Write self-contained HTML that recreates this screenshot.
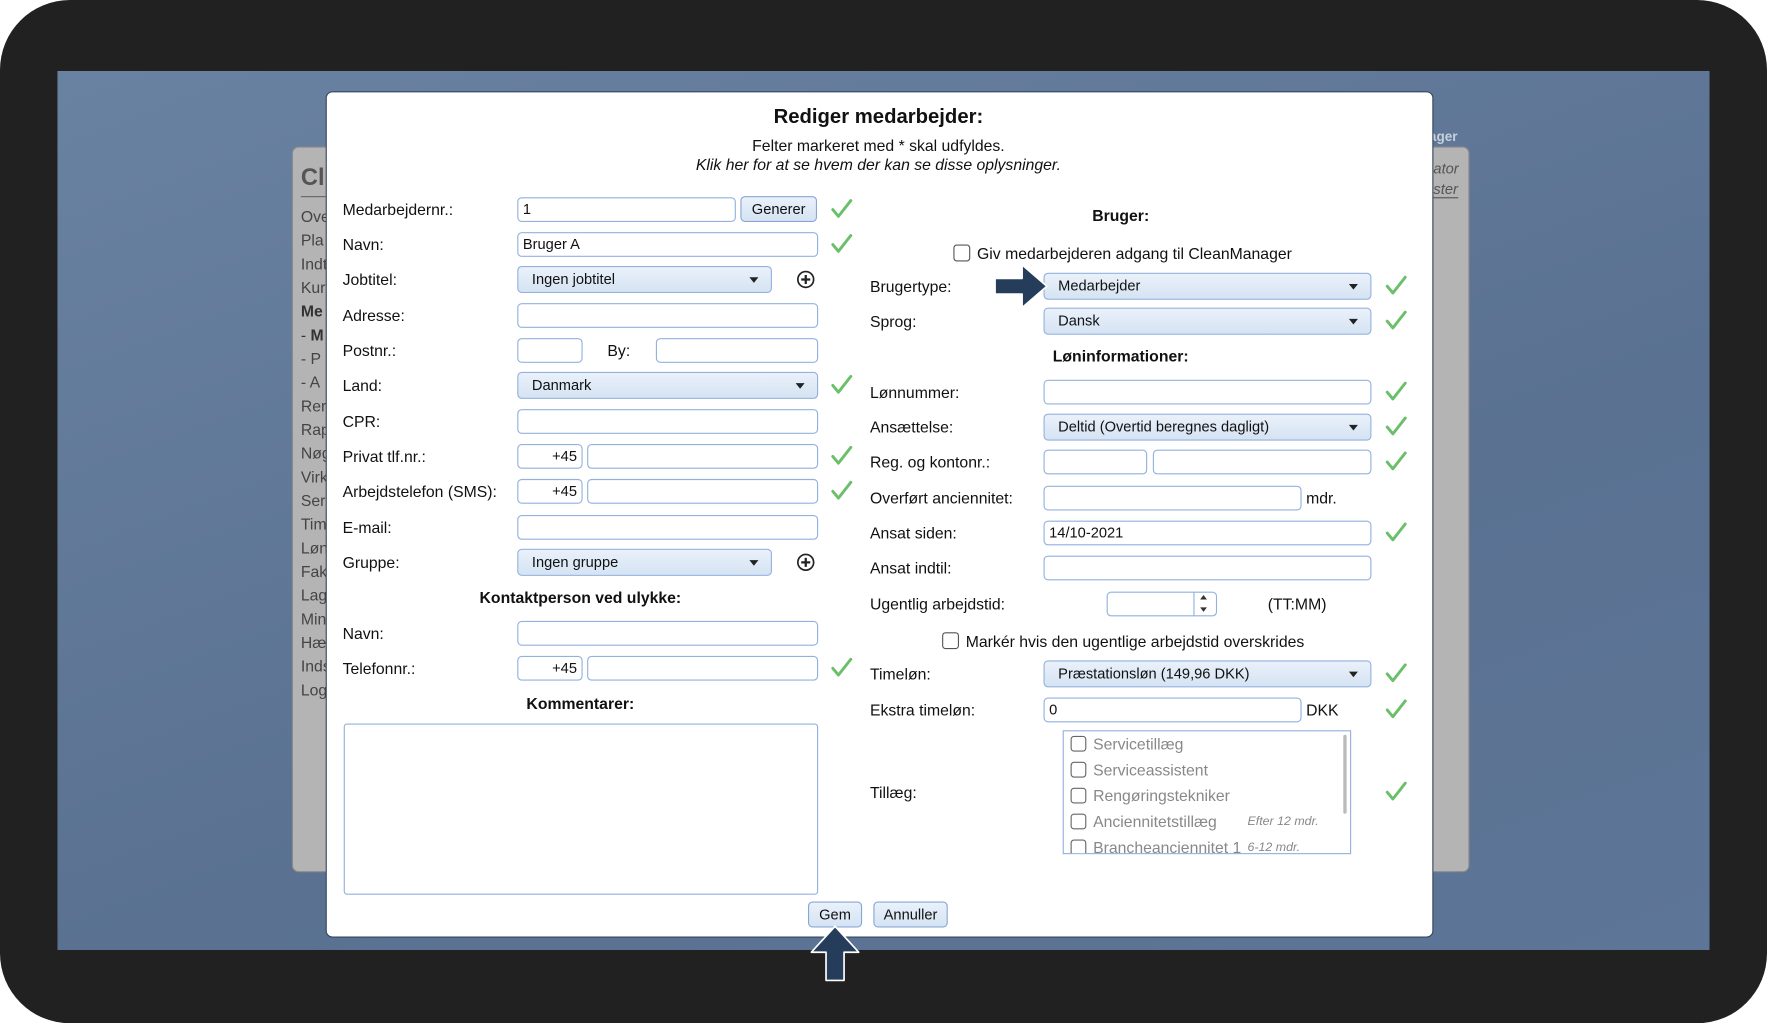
<!DOCTYPE html>
<html><head><meta charset="utf-8"><style>
html,body{margin:0;padding:0;width:1767px;height:1023px;overflow:hidden;background:#fff;}
#s{position:absolute;left:0;top:0;width:1568px;height:908px;transform:scale(1.12691);transform-origin:0 0;font-family:"Liberation Sans",sans-serif;color:#111;font-size:14px;}
.a{position:absolute;}
#frame{left:0;top:0;width:1568px;height:908px;background:#212121;border-radius:62px;}
#screen{left:51px;top:63px;width:1466px;height:780px;background:linear-gradient(160deg,#6a82a2 0%,#5a7192 60%,#5d7596 100%);}
#bgp{left:259px;top:130px;width:1043px;height:642px;background:#b4b4b4;border:1px solid #8a8a8a;border-radius:6px;}
.mi{position:absolute;left:267px;font-size:14px;color:#444;}
#modal{left:289px;top:81px;width:981px;height:749px;background:#fff;border:1px solid #34465f;border-radius:6px;}
.l{position:absolute;font-size:14px;white-space:nowrap;transform:translateY(-50%);}
.in{position:absolute;height:22px;border:1px solid #93b1dd;border-radius:4px;background:#fff;box-sizing:border-box;font-size:13px;padding-left:4px;line-height:20px;transform:translateY(-50%);}
.sel{position:absolute;height:24px;border:1px solid #93b1dd;border-radius:4px;background:linear-gradient(#eaf1fa,#d5e3f3);box-sizing:border-box;font-size:13px;padding-left:12px;line-height:22px;transform:translateY(-50%);}
.sel:after{content:"";position:absolute;right:11px;top:9px;border-left:4.5px solid transparent;border-right:4.5px solid transparent;border-top:5px solid #222;}
.ck{position:absolute;transform:translateY(-50%);width:20px;height:20px;}
.b{font-weight:bold;}
.cb{display:inline-block;width:12px;height:12px;border:1px solid #555;border-radius:3px;vertical-align:-2px;margin-right:6px;background:#fff;}
.btn{position:absolute;height:23px;border:1px solid #86a6d4;border-radius:4px;background:linear-gradient(#eaf1fa,#d5e3f3);box-sizing:border-box;font-size:13px;text-align:center;line-height:21px;}
.li{position:absolute;left:6px;font-size:14px;color:#888;white-space:nowrap;}
.li .cb{border-color:#666;width:12px;height:12px;}
</style></head><body><div id="s">
<div class="a" id="frame"></div>
<div class="a" id="screen"></div>
<div class="a" id="bgp"></div>
<div class="a" style="left:267px;top:146px;font-size:21px;font-weight:bold;color:#555">Cl</div>
<div class="a" style="left:267px;top:174px;width:22px;border-top:1px solid #666"></div>
<div class="mi" style="top:184px">Ove</div><div class="mi" style="top:205px">Pla</div><div class="mi" style="top:226px">Indt</div><div class="mi" style="top:247px">Kur</div><div class="mi b" style="top:268px;color:#333">Me</div><div class="mi" style="top:289px;color:#333"> - <b>M</b></div><div class="mi" style="top:310px"> - P</div><div class="mi" style="top:331px"> - A</div><div class="mi" style="top:352px">Rer</div><div class="mi" style="top:373px">Rap</div><div class="mi" style="top:394px">Nøg</div><div class="mi" style="top:415px">Virk</div><div class="mi" style="top:436px">Ser</div><div class="mi" style="top:457px">Tim</div><div class="mi" style="top:478px">Løn</div><div class="mi" style="top:499px">Fak</div><div class="mi" style="top:520px">Lag</div><div class="mi" style="top:541px">Min</div><div class="mi" style="top:562px">Hæ</div><div class="mi" style="top:583px">Inds</div><div class="mi" style="top:604px">Log</div>
<div class="a" style="left:1268px;top:114px;font-size:12px;font-weight:bold;color:#c8d0dc">ager</div>
<div class="a" style="left:1272px;top:142px;font-size:13px;font-style:italic;color:#555">ator</div>
<div class="a" style="left:1272px;top:160px;font-size:13px;font-style:italic;color:#555;border-bottom:1px solid #555">ster</div>

<div class="a" id="modal"></div>
<div class="a b" style="left:289px;width:981px;top:93px;text-align:center;font-size:18px">Rediger medarbejder:</div>
<div class="a" style="left:289px;width:981px;top:121px;text-align:center;font-size:14px">Felter markeret med * skal udfyldes.</div>
<div class="a" style="left:289px;width:981px;top:138px;text-align:center;font-size:14px;font-style:italic">Klik her for at se hvem der kan se disse oplysninger.</div>

<!-- left col -->
<div class="l" style="left:304px;top:186px">Medarbejdernr.:</div>
<div class="in" style="left:459px;top:186px;width:194px">1</div>
<div class="btn" style="left:657px;top:174px;width:68px">Generer</div>
<div class="l" style="left:304px;top:217px">Navn:</div>
<div class="in" style="left:459px;top:217px;width:267px">Bruger A</div>
<div class="l" style="left:304px;top:248px">Jobtitel:</div>
<div class="sel" style="left:459px;top:248px;width:226px">Ingen jobtitel</div>
<div class="l" style="left:304px;top:280px">Adresse:</div>
<div class="in" style="left:459px;top:280px;width:267px"></div>
<div class="l" style="left:304px;top:311px">Postnr.:</div>
<div class="in" style="left:459px;top:311px;width:58px"></div>
<div class="l" style="left:539px;top:311px">By:</div>
<div class="in" style="left:582px;top:311px;width:144px"></div>
<div class="l" style="left:304px;top:342px">Land:</div>
<div class="sel" style="left:459px;top:342px;width:267px">Danmark</div>
<div class="l" style="left:304px;top:374px">CPR:</div>
<div class="in" style="left:459px;top:374px;width:267px"></div>
<div class="l" style="left:304px;top:405px">Privat tlf.nr.:</div>
<div class="in" style="left:459px;top:405px;width:58px;text-align:right;padding-right:4px">+45</div>
<div class="in" style="left:521px;top:405px;width:205px"></div>
<div class="l" style="left:304px;top:436px">Arbejdstelefon (SMS):</div>
<div class="in" style="left:459px;top:436px;width:58px;text-align:right;padding-right:4px">+45</div>
<div class="in" style="left:521px;top:436px;width:205px"></div>
<div class="l" style="left:304px;top:468px">E-mail:</div>
<div class="in" style="left:459px;top:468px;width:267px"></div>
<div class="l" style="left:304px;top:499px">Gruppe:</div>
<div class="sel" style="left:459px;top:499px;width:226px">Ingen gruppe</div>
<div class="l b" style="left:304px;width:422px;text-align:center;top:530px">Kontaktperson ved ulykke:</div>
<div class="l" style="left:304px;top:562px">Navn:</div>
<div class="in" style="left:459px;top:562px;width:267px"></div>
<div class="l" style="left:304px;top:593px">Telefonnr.:</div>
<div class="in" style="left:459px;top:593px;width:58px;text-align:right;padding-right:4px">+45</div>
<div class="in" style="left:521px;top:593px;width:205px"></div>
<div class="l b" style="left:304px;width:422px;text-align:center;top:624px">Kommentarer:</div>
<div class="a" style="left:305px;top:642px;width:421px;height:152px;border:1px solid #93b1dd;border-radius:3px;box-sizing:border-box"></div>

<svg class="a" style="left:705px;top:239px" width="20" height="20" viewBox="0 0 20 20"><circle cx="10" cy="9" r="7" fill="none" stroke="#222" stroke-width="1.5"/><path d="M10 5v8M6 9h8" stroke="#222" stroke-width="2"/></svg>
<svg class="a" style="left:705px;top:490px" width="20" height="20" viewBox="0 0 20 20"><circle cx="10" cy="9" r="7" fill="none" stroke="#222" stroke-width="1.5"/><path d="M10 5v8M6 9h8" stroke="#222" stroke-width="2"/></svg>

<!-- right col -->
<div class="l b" style="left:772px;width:445px;text-align:center;top:191px">Bruger:</div>
<div class="l" style="left:846px;top:225px"><span class="cb" style="width:13px;height:13px"></span>Giv medarbejderen adgang til CleanManager</div>
<div class="l" style="left:772px;top:254px">Brugertype:</div>
<div class="sel" style="left:926px;top:254px;width:291px">Medarbejder</div>
<div class="l" style="left:772px;top:285px">Sprog:</div>
<div class="sel" style="left:926px;top:285px;width:291px">Dansk</div>
<div class="l b" style="left:772px;width:445px;text-align:center;top:316px">Løninformationer:</div>
<div class="l" style="left:772px;top:348px">Lønnummer:</div>
<div class="in" style="left:926px;top:348px;width:291px"></div>
<div class="l" style="left:772px;top:379px">Ansættelse:</div>
<div class="sel" style="left:926px;top:379px;width:291px">Deltid (Overtid beregnes dagligt)</div>
<div class="l" style="left:772px;top:410px">Reg. og kontonr.:</div>
<div class="in" style="left:926px;top:410px;width:92px"></div>
<div class="in" style="left:1023px;top:410px;width:194px"></div>
<div class="l" style="left:772px;top:442px">Overført anciennitet:</div>
<div class="in" style="left:926px;top:442px;width:229px"></div>
<div class="l" style="left:1159px;top:442px">mdr.</div>
<div class="l" style="left:772px;top:473px">Ansat siden:</div>
<div class="in" style="left:926px;top:473px;width:291px">14/10-2021</div>
<div class="l" style="left:772px;top:504px">Ansat indtil:</div>
<div class="in" style="left:926px;top:504px;width:291px"></div>
<div class="l" style="left:772px;top:536px">Ugentlig arbejdstid:</div>
<div class="in" style="left:982px;top:536px;width:98px"></div>
<div class="a" style="left:1059px;top:525px;width:1px;height:22px;background:#93b1dd"></div>
<div class="a" style="left:1065px;top:528px;border-left:3.5px solid transparent;border-right:3.5px solid transparent;border-bottom:4px solid #333"></div>
<div class="a" style="left:1065px;top:539px;border-left:3.5px solid transparent;border-right:3.5px solid transparent;border-top:4px solid #333"></div>
<div class="l" style="left:1125px;top:536px">(TT:MM)</div>
<div class="l" style="left:836px;top:569px"><span class="cb" style="width:13px;height:13px"></span>Markér hvis den ugentlige arbejdstid overskrides</div>
<div class="l" style="left:772px;top:598px">Timeløn:</div>
<div class="sel" style="left:926px;top:598px;width:291px">Præstationsløn (149,96 DKK)</div>
<div class="l" style="left:772px;top:630px">Ekstra timeløn:</div>
<div class="in" style="left:926px;top:630px;width:229px">0</div>
<div class="l" style="left:1159px;top:630px">DKK</div>
<div class="l" style="left:772px;top:703px">Tillæg:</div>
<div class="a" style="left:943px;top:648px;width:256px;height:110px;border:1px solid #93b1dd;box-sizing:border-box;overflow:hidden">
<div class="a" style="right:3px;top:3px;width:3px;height:70px;background:#bbb;border-radius:2px"></div>
<div class="li" style="top:3px"><span class="cb"></span>Servicetillæg</div>
<div class="li" style="top:26px"><span class="cb"></span>Serviceassistent</div>
<div class="li" style="top:49px"><span class="cb"></span>Rengøringstekniker</div>
<div class="li" style="top:72px"><span class="cb"></span>Anciennitetstillæg</div>
<div class="a" style="left:163px;top:74px;font-size:11px;font-style:italic;color:#888">Efter 12 mdr.</div>
<div class="li" style="top:95px"><span class="cb"></span>Brancheanciennitet 1</div>
<div class="a" style="left:163px;top:97px;font-size:11px;font-style:italic;color:#888">6-12 mdr.</div>
</div>

<!-- checks -->
<svg width="0" height="0" style="position:absolute"><defs><path id="ck" d="M2 10 L7 16 L18 2" fill="none" stroke="#6cbf6a" stroke-width="2.6" stroke-linecap="round" stroke-linejoin="round"/></defs></svg>
<svg class="ck" style="left:737px;top:186px"><use href="#ck"/></svg>
<svg class="ck" style="left:737px;top:217px"><use href="#ck"/></svg>
<svg class="ck" style="left:737px;top:342px"><use href="#ck"/></svg>
<svg class="ck" style="left:737px;top:405px"><use href="#ck"/></svg>
<svg class="ck" style="left:737px;top:436px"><use href="#ck"/></svg>
<svg class="ck" style="left:737px;top:593px"><use href="#ck"/></svg>
<svg class="ck" style="left:1229px;top:254px"><use href="#ck"/></svg>
<svg class="ck" style="left:1229px;top:285px"><use href="#ck"/></svg>
<svg class="ck" style="left:1229px;top:348px"><use href="#ck"/></svg>
<svg class="ck" style="left:1229px;top:379px"><use href="#ck"/></svg>
<svg class="ck" style="left:1229px;top:410px"><use href="#ck"/></svg>
<svg class="ck" style="left:1229px;top:473px"><use href="#ck"/></svg>
<svg class="ck" style="left:1229px;top:598px"><use href="#ck"/></svg>
<svg class="ck" style="left:1229px;top:630px"><use href="#ck"/></svg>
<svg class="ck" style="left:1229px;top:703px"><use href="#ck"/></svg>

<div class="btn" style="left:717px;top:800px;width:48px">Gem</div>
<div class="btn" style="left:775px;top:800px;width:66px">Annuller</div>

<!-- arrows -->
<svg class="a" style="left:880px;top:232px" width="54" height="44" viewBox="0 0 54 44"><path d="M3 15 H27 V3 L49 22 L27 41 V29 H3 Z" fill="#253c5b" stroke="#fff" stroke-width="1.5" stroke-linejoin="round"/></svg>
<svg class="a" style="left:716px;top:819px" width="50" height="54" viewBox="0 0 50 54"><path d="M25 3 L46 26 H33 V51 H17 V26 H4 Z" fill="#253c5b" stroke="#fff" stroke-width="1.5" stroke-linejoin="round"/></svg>
</div></body></html>
